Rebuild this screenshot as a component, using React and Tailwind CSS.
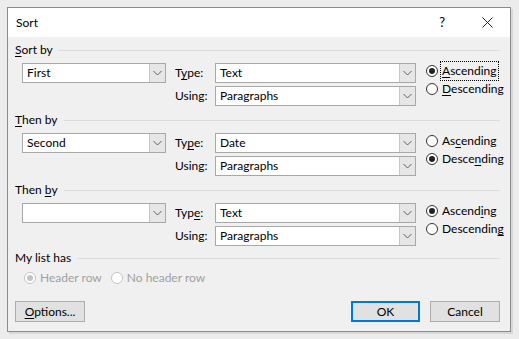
const font = { fontFamily: 'Lato, "Noto Sans", sans-serif' };

function U({ children }) {
  return <span className="underline underline-offset-2">{children}</span>;
}

function Chevron() {
  return (
    <svg width="9" height="6" viewBox="0 0 9 6">
      <path d="M0.5 1 L4.5 5 L8.5 1" fill="none" stroke="#606060" strokeWidth="1" />
    </svg>
  );
}

function Combo({ value, width, className = '' }) {
  return (
    <div
      className={`flex h-[20px] items-stretch border border-[#a8a8a8] bg-white ${className}`}
      style={{ width }}
    >
      <div className="flex flex-1 items-center pl-[4px] text-[#000]">{value}</div>
      <div className="flex w-[16px] items-center justify-center border-l border-[#c8c8c8] bg-[#e6e6e6]">
        <Chevron />
      </div>
    </div>
  );
}

function Radio({ checked, disabled, label, focus }) {
  return (
    <div className="flex h-[18px] items-center">
      <div
        className={`flex h-[12px] w-[12px] items-center justify-center rounded-full border bg-white ${
          disabled ? 'border-[#c4c4c4]' : 'border-[#333]'
        }`}
      >
        {checked && (
          <div className={`h-[6px] w-[6px] rounded-full ${disabled ? 'bg-[#c4c4c4]' : 'bg-[#222]'}`} />
        )}
      </div>
      <span
        className={`ml-[3px] px-[1px] ${disabled ? 'text-[#a0a0a0]' : 'text-black'} ${
          focus ? 'outline outline-1 outline-dotted outline-[#000]' : ''
        }`}
      >
        {label}
      </span>
    </div>
  );
}

function Header({ children, className = '' }) {
  return (
    <div className={`flex h-[14px] items-center ${className}`}>
      <span className="leading-none">{children}</span>
      <div className="ml-[6px] h-px flex-1 bg-[#dcdcdc]" />
    </div>
  );
}

function Section({ label, first, type, typeLabel, asc, desc, ascending, focus }) {
  return (
    <div>
      <Header>{label}</Header>
      <div className="mt-[6px] flex">
        <div className="ml-[7px] w-[144px]">
          <Combo value={first} width={144} />
        </div>
        <div className="ml-[9px] flex flex-col gap-[3px]">
          <div className="flex items-center">
            <div className="w-[40px]">{typeLabel}</div>
            <Combo value={type} width={201} />
          </div>
          <div className="flex items-center">
            <div className="w-[40px]">Using:</div>
            <Combo value="Paragraphs" width={201} />
          </div>
        </div>
        <div className="ml-[10px] -mt-[1px] flex flex-col">
          <Radio checked={ascending} label={asc} focus={focus} />
          <Radio checked={!ascending} label={desc} />
        </div>
      </div>
    </div>
  );
}

function Button({ children, primary, className = '' }) {
  return (
    <div
      className={`flex h-[21px] items-center justify-center bg-[#e1e1e1] ${
        primary ? 'border-2 border-[#0078d7]' : 'border border-[#adadad]'
      } ${className}`}
    >
      {children}
    </div>
  );
}

export default function App() {
  return (
    <div className="h-[339px] w-[519px] bg-[#ececec] p-[7px] text-[12px] text-black" style={font}>
      <div className="flex h-[325px] w-[504px] flex-col border border-[#8c8c8c] bg-[#f0f0f0] shadow-[2px_2px_0_#d8d8d8]">
        <div className="flex h-[29px] items-center bg-white pl-[8px]">
          <span>Sort</span>
          <span className="ml-auto mr-[37px] text-[13px]">?</span>
          <svg width="11" height="11" viewBox="0 0 11 11" className="mr-[17px]">
            <path d="M0.5 0.5 L10.5 10.5 M10.5 0.5 L0.5 10.5" stroke="#222" strokeWidth="1" />
          </svg>
        </div>
        <div className="flex flex-1 flex-col pl-[7px] pr-[10px] pt-[6px]">
          <Section
            label={<><U>S</U>ort by</>}
            first="First"
            type="Text"
            typeLabel={<>T<U>y</U>pe:</>}
            asc={<><U>A</U>scending</>}
            desc={<><U>D</U>escending</>}
            ascending
            focus
          />
          <div className="mt-[7px]">
            <Section
              label={<><U>T</U>hen by</>}
              first="Second"
              type="Date"
              typeLabel={<>Ty<U>p</U>e:</>}
              asc={<>As<U>c</U>ending</>}
              desc={<>Desce<U>n</U>ding</>}
              ascending={false}
            />
          </div>
          <div className="mt-[7px]">
            <Section
              label={<>Then <U>b</U>y</>}
              first=""
              type="Text"
              typeLabel={<>Typ<U>e</U>:</>}
              asc={<>Ascend<U>i</U>ng</>}
              desc={<>Descendin<U>g</U></>}
              ascending
            />
          </div>
          <Header className="mt-[5px]">My list has</Header>
          <div className="ml-[9px] mt-[4px] flex items-center">
            <Radio checked disabled label="Header row" />
            <div className="ml-[8px]">
              <Radio disabled label="No header row" />
            </div>
          </div>
          <div className="mt-[14px] flex">
            <Button className="w-[70px]">
              <span><U>O</U>ptions...</span>
            </Button>
            <Button primary className="ml-auto w-[69px]">OK</Button>
            <Button className="ml-[10px] w-[70px]">Cancel</Button>
          </div>
        </div>
      </div>
    </div>
  );
}
